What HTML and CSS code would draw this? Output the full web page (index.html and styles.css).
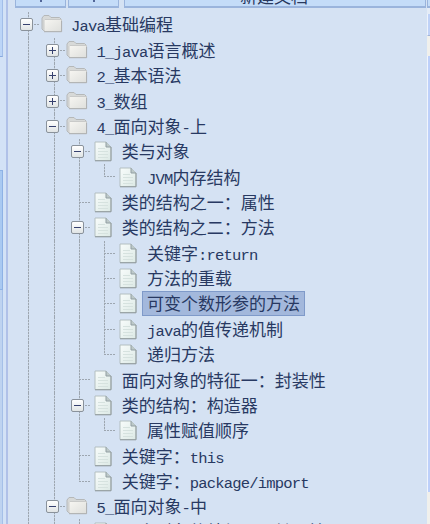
FILE: index.html
```html
<!DOCTYPE html>
<html lang="zh-CN">
<head>
<meta charset="utf-8">
<title>Java基础编程</title>
<link rel="stylesheet" href="styles.css">
</head>
<body>
<svg width="0" height="0" class="defs">
  <defs>
    <linearGradient id="paper" x1="0" y1="0" x2="1" y2="1"><stop offset="0" stop-color="#f8fcfb"/><stop offset="1" stop-color="#dce9e5"/></linearGradient>
    <linearGradient id="fold" x1="0" y1="0" x2="1" y2="1"><stop offset="0" stop-color="#f7f6f2"/><stop offset="1" stop-color="#dedfdc"/></linearGradient>
    <symbol id="page" viewBox="0 0 18 21">
      <path d="M1 1H12L17 6V19.5H1Z" fill="url(#paper)" stroke="#b3bfc0"/>
      <path d="M12 1V6H17" fill="#bdc9c9" stroke="#929fa3"/>
      <path d="M1 19.8H17V6" fill="none" stroke="#929b9d"/>
      <path d="M4 7.5H11M4 10.5H14M4 13.5H14M4 16.500H14" stroke="#d6e2df"/>
    </symbol>
    <symbol id="folder" viewBox="0 0 22 19">
      <path d="M1 15V4L3 1.500H8L10 3.500H18.500L20 5V17H3Z" fill="#d7d9d8" stroke="#b5b8b9"/>
      <path d="M4 5.500H20.500V17.500H4Q3 17 3 15.500V6.500Z" fill="url(#fold)" stroke="#c9cac9"/>
      <path d="M3 17.700H20.600V7" fill="none" stroke="#aeb0b1"/>
    </symbol>
  </defs>
</svg>
<div class="app">
  <div class="rail"><div class="rail-top"></div><div class="rail-gap"></div><div class="rail-tab"></div><div class="rail-rest"></div></div>
  <div class="panel">
    <div class="toolbar"><div class="btn b1"><i></i></div><div class="btn b2"><i></i></div><div class="btn b3"><span>新建文档</span></div></div>
    <div class="tree">
      <div class="row"><b class="v start"><s class="box"></s></b><svg class="ico folder"><use href="#folder"/></svg><span class="label"><em>Java</em>基础编程</span></div>
      <div class="row"><b class="v"></b><b class="v"><s class="box plus"></s></b><svg class="ico folder"><use href="#folder"/></svg><span class="label"><em>1_java</em>语言概述</span></div>
      <div class="row"><b class="v"></b><b class="v"><s class="box plus"></s></b><svg class="ico folder"><use href="#folder"/></svg><span class="label"><em>2_</em>基本语法</span></div>
      <div class="row"><b class="v"></b><b class="v"><s class="box plus"></s></b><svg class="ico folder"><use href="#folder"/></svg><span class="label"><em>3_</em>数组</span></div>
      <div class="row"><b class="v"></b><b class="v"><s class="box"></s></b><svg class="ico folder"><use href="#folder"/></svg><span class="label"><em>4_</em>面向对象<em>-</em>上</span></div>
      <div class="row"><b class="v"></b><b class="v"></b><b class="v h"><s class="box"></s></b><svg class="ico page"><use href="#page"/></svg><span class="label">类与对象</span></div>
      <div class="row"><b class="v"></b><b class="v"></b><b class="v"></b><b class="v h end"></b><svg class="ico page"><use href="#page"/></svg><span class="label"><em>JVM</em>内存结构</span></div>
      <div class="row"><b class="v"></b><b class="v"></b><b class="v h"></b><svg class="ico page"><use href="#page"/></svg><span class="label">类的结构之一：属性</span></div>
      <div class="row"><b class="v"></b><b class="v"></b><b class="v h"><s class="box"></s></b><svg class="ico page"><use href="#page"/></svg><span class="label">类的结构之二：方法</span></div>
      <div class="row"><b class="v"></b><b class="v"></b><b class="v"></b><b class="v h"></b><svg class="ico page"><use href="#page"/></svg><span class="label">关键字<em>:return</em></span></div>
      <div class="row"><b class="v"></b><b class="v"></b><b class="v"></b><b class="v h"></b><svg class="ico page"><use href="#page"/></svg><span class="label">方法的重载</span></div>
      <div class="row"><b class="v"></b><b class="v"></b><b class="v"></b><b class="v h"></b><svg class="ico page"><use href="#page"/></svg><span class="label selected">可变个数形参的方法</span></div>
      <div class="row"><b class="v"></b><b class="v"></b><b class="v"></b><b class="v h"></b><svg class="ico page"><use href="#page"/></svg><span class="label"><em>java</em>的值传递机制</span></div>
      <div class="row"><b class="v"></b><b class="v"></b><b class="v"></b><b class="v h end"></b><svg class="ico page"><use href="#page"/></svg><span class="label">递归方法</span></div>
      <div class="row"><b class="v"></b><b class="v"></b><b class="v h"></b><svg class="ico page"><use href="#page"/></svg><span class="label">面向对象的特征一：封装性</span></div>
      <div class="row"><b class="v"></b><b class="v"></b><b class="v h"><s class="box"></s></b><svg class="ico page"><use href="#page"/></svg><span class="label">类的结构：构造器</span></div>
      <div class="row"><b class="v"></b><b class="v"></b><b class="v"></b><b class="v h end"></b><svg class="ico page"><use href="#page"/></svg><span class="label">属性赋值顺序</span></div>
      <div class="row"><b class="v"></b><b class="v"></b><b class="v h"></b><svg class="ico page"><use href="#page"/></svg><span class="label">关键字：<em>this</em></span></div>
      <div class="row"><b class="v"></b><b class="v"></b><b class="v h end"></b><svg class="ico page"><use href="#page"/></svg><span class="label">关键字：<em>package/import</em></span></div>
      <div class="row"><b class="v"></b><b class="v"><s class="box"></s></b><svg class="ico folder"><use href="#folder"/></svg><span class="label"><em>5_</em>面向对象<em>-</em>中</span></div>
      <div class="row last"><b class="v"></b><b class="v"></b><b class="v h"></b><svg class="ico page"><use href="#page"/></svg><span class="label">面向对象的特征二：继承性</span></div>
    </div>
  </div>
  <div class="scroll"><div class="edge"></div><div class="up"></div><div class="track"></div><div class="thumb"></div><div class="track rest"></div></div>
</div>
</body>
</html>
```
FILE: styles.css
```css
* { box-sizing: border-box; }
body { margin: 0; overflow: hidden; background: #d5e2f3; }
.defs { position: absolute; }
.app { display: flex; width: 430px; height: 524px; overflow: hidden; }
.rail { width: 8px; flex: none; display: flex; flex-direction: column; border-right: 2px solid #b0c1e8; background: #d3e2f6; }
.rail-top { height: 57px; background: #bcd5f7; border-right: 1px solid #a2bee9; border-bottom: 1px solid #88aadf; width: 3px; }
.rail-gap { height: 113px; }
.rail-tab { height: 120px; width: 3px; background: #a9c9f1; border: 1px solid #8eb2e5; border-left: 0; }
.rail-rest { flex: 1; width: 3px; background: #bed3f0; border-right: 1px solid #a5c0e8; }
.panel { width: 419px; flex: none; }
.toolbar { display: flex; height: 7.500px; padding-left: 7px; gap: 2px; }
.btn { height: 7.500px; overflow: hidden; background: #c4dcf8; border: 1px solid #9ab4dc; border-top: 0; border-bottom: 2px solid #9ab4dc; display: flex; justify-content: center; }
.btn i { width: 2px; height: 2px; background: #526698; }
.b1 { width: 51px; }
.b2 { width: 51px; }
.b3 { width: 302px; margin-left: 3px; }
.b3 span { font: 17px/17px "Noto Sans CJK SC", sans-serif; color: #28385e; margin-top: -13px; margin-left: -2px; }
.tree { padding: 4.800px 0 0 6.300px; }
.row { display: flex; align-items: center; height: 25.370px; white-space: nowrap; }
.row b { position: relative; width: 25.370px; height: 25.370px; flex: none; display: flex; align-items: center; justify-content: center; }
.v::before { content: ""; position: absolute; left: 14px; top: 0; bottom: 0; width: 1px; background: repeating-linear-gradient(#9da6b0 0 2px, #c5d0dc 2px 3px); }
.v.end::before { bottom: 50%; }
.v::after { content: ""; position: absolute; left: 14px; width: 12px; top: 12px; height: 1px; }
.v.h::after, .v:has(.box)::after { background: repeating-linear-gradient(90deg, #9da6b0 0 2px, #d5e2f3 2px 3px); }
.box { position: relative; z-index: 1; width: 13px; height: 13px; border: 1px solid #8a929b; border-radius: 2px; background: linear-gradient(#fff, #e0e4e5); }
.box::before { content: ""; position: absolute; left: 2px; top: 5px; width: 7px; height: 1px; background: #36416f; }
.plus::after { content: ""; position: absolute; left: 5px; top: 2px; width: 1px; height: 7px; background: #36416f; }
.ico { width: 22px; height: 21px; flex: none; margin: 0 2.400px 0 1px; }
.folder { height: 19px; margin-top: -2px; }
.page { width: 18px; margin: 0 4.070px 0 3.300px; }
.label { height: 25px; padding: 0 4px; margin-left: 1px; border: 1px solid transparent; font: 17px/21px "Noto Sans CJK SC", sans-serif; color: #283962; }
.label em { font: 15.500px/20px "Liberation Mono", monospace; letter-spacing: -0.800px; }
.last .label { line-height: 20px; }
.selected { background: #a3b8dc; border-color: #7f9ac9; }
.scroll { width: 3px; flex: none; display: flex; flex-direction: column; background: #e4ecf7; }
.edge { height: 8px; margin-bottom: 6px; background: #c4dcf8; border-left: 1px solid #9ab4dc; border-bottom: 2px solid #9ab4dc; }
.up { height: 22px; background: #bfd2f7; border-left: 1px solid #eef3fc; border-bottom: 1px solid #a2b4d8; }
.track { height: 20px; background: #f0f0ec; }
.thumb { height: 436px; flex: none; background: #bdd0fa; border-left: 1px solid #f1f5fd; }
.rest { flex: 1; height: auto; }
```
